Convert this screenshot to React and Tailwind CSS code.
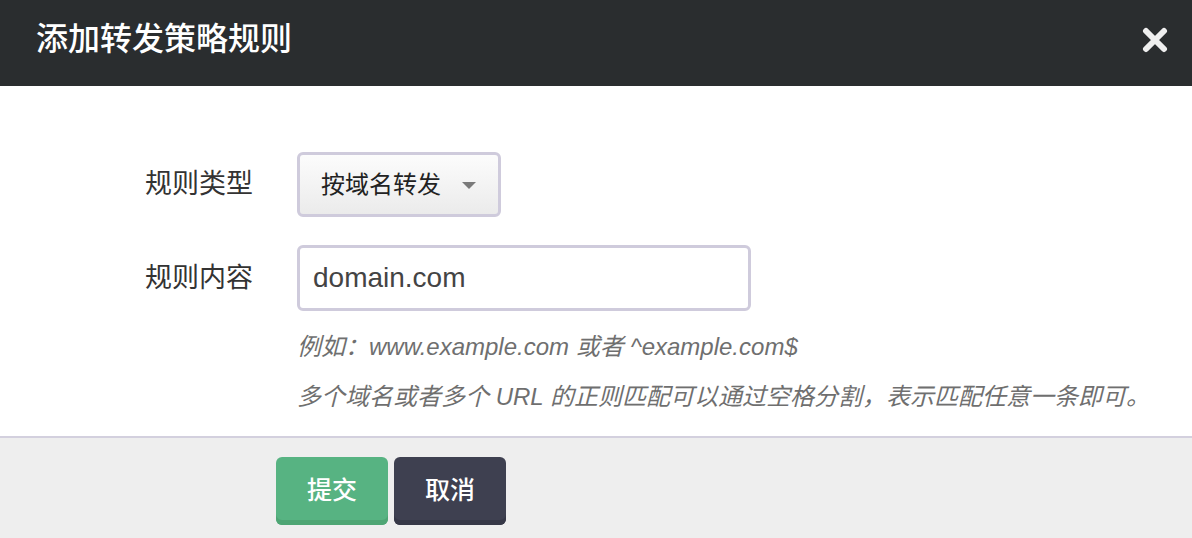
import React from 'react';

const font = { fontFamily: '"Liberation Sans", "Noto Sans CJK SC", sans-serif' };

const CloseIcon = () => (
  <svg width="26" height="26" viewBox="0 0 26 26" className="block">
    <path d="M4 4 L22 22 M22 4 L4 22" stroke="#efefef" strokeWidth="6" strokeLinecap="round" />
  </svg>
);

const Header = () => (
  <div className="h-[86px] bg-[#2a2d2f] flex items-center justify-between pl-[36px] pr-[24px]">
    <h1 className="text-[32px] text-white leading-none font-medium mb-[8px]">添加转发策略规则</h1>
    <button className="p-0 mb-[6px]">
      <CloseIcon />
    </button>
  </div>
);

const FormRow = ({ label, children }) => (
  <div className="flex items-center">
    <div className="w-[152px] text-[27px] text-[#333] leading-none">{label}</div>
    {children}
  </div>
);

const App = () => {
  return (
    <div className="w-[1192px] h-[538px] flex flex-col bg-white overflow-hidden" style={font}>
      <Header />
      <div className="flex-1 pl-[145px] pt-[66px]">
        <FormRow label="规则类型">
          <div className="w-[204px] h-[65px] rounded-[6px] border-[3px] border-[#cfcbdc] bg-gradient-to-b from-[#fcfcfc] to-[#ebebeb] flex items-center pl-[21px] pr-[22px] justify-between">
            <span className="text-[24px] text-[#222] leading-none">按域名转发</span>
            <span className="w-0 h-0 border-l-[7px] border-r-[7px] border-t-[7px] border-l-transparent border-r-transparent border-t-[#7a7a7a] mt-[2px]" />
          </div>
        </FormRow>
        <div className="h-[28px]" />
        <FormRow label="规则内容">
          <div className="w-[454px] h-[66px] rounded-[6px] border-[3px] border-[#cfcbdc] bg-white flex items-center pl-[13px]">
            <span className="text-[28px] text-[#444] leading-none">domain.com</span>
          </div>
        </FormRow>
        <div className="pl-[152px] pt-[11px] text-[24px] italic text-[#6f6f6f] leading-[50px]">
          <p>例如：www.example.com 或者 ^example.com$</p>
          <p>多个域名或者多个 URL 的正则匹配可以通过空格分割，表示匹配任意一条即可。</p>
        </div>
      </div>
      <div className="h-[102px] border-t-2 border-[#d3d0de] bg-[#eeeeee] flex items-start gap-[6px] pl-[276px] pt-[19px]">
        <button className="w-[112px] h-[68px] rounded-[6px] bg-[#57b382] shadow-[inset_0_-5px_0_#4ea574] text-white text-[25px] font-medium">提交</button>
        <button className="w-[112px] h-[68px] rounded-[6px] bg-[#3e4050] shadow-[inset_0_-5px_0_#363847] text-white text-[25px] font-medium">取消</button>
      </div>
    </div>
  );
};

export default App;
